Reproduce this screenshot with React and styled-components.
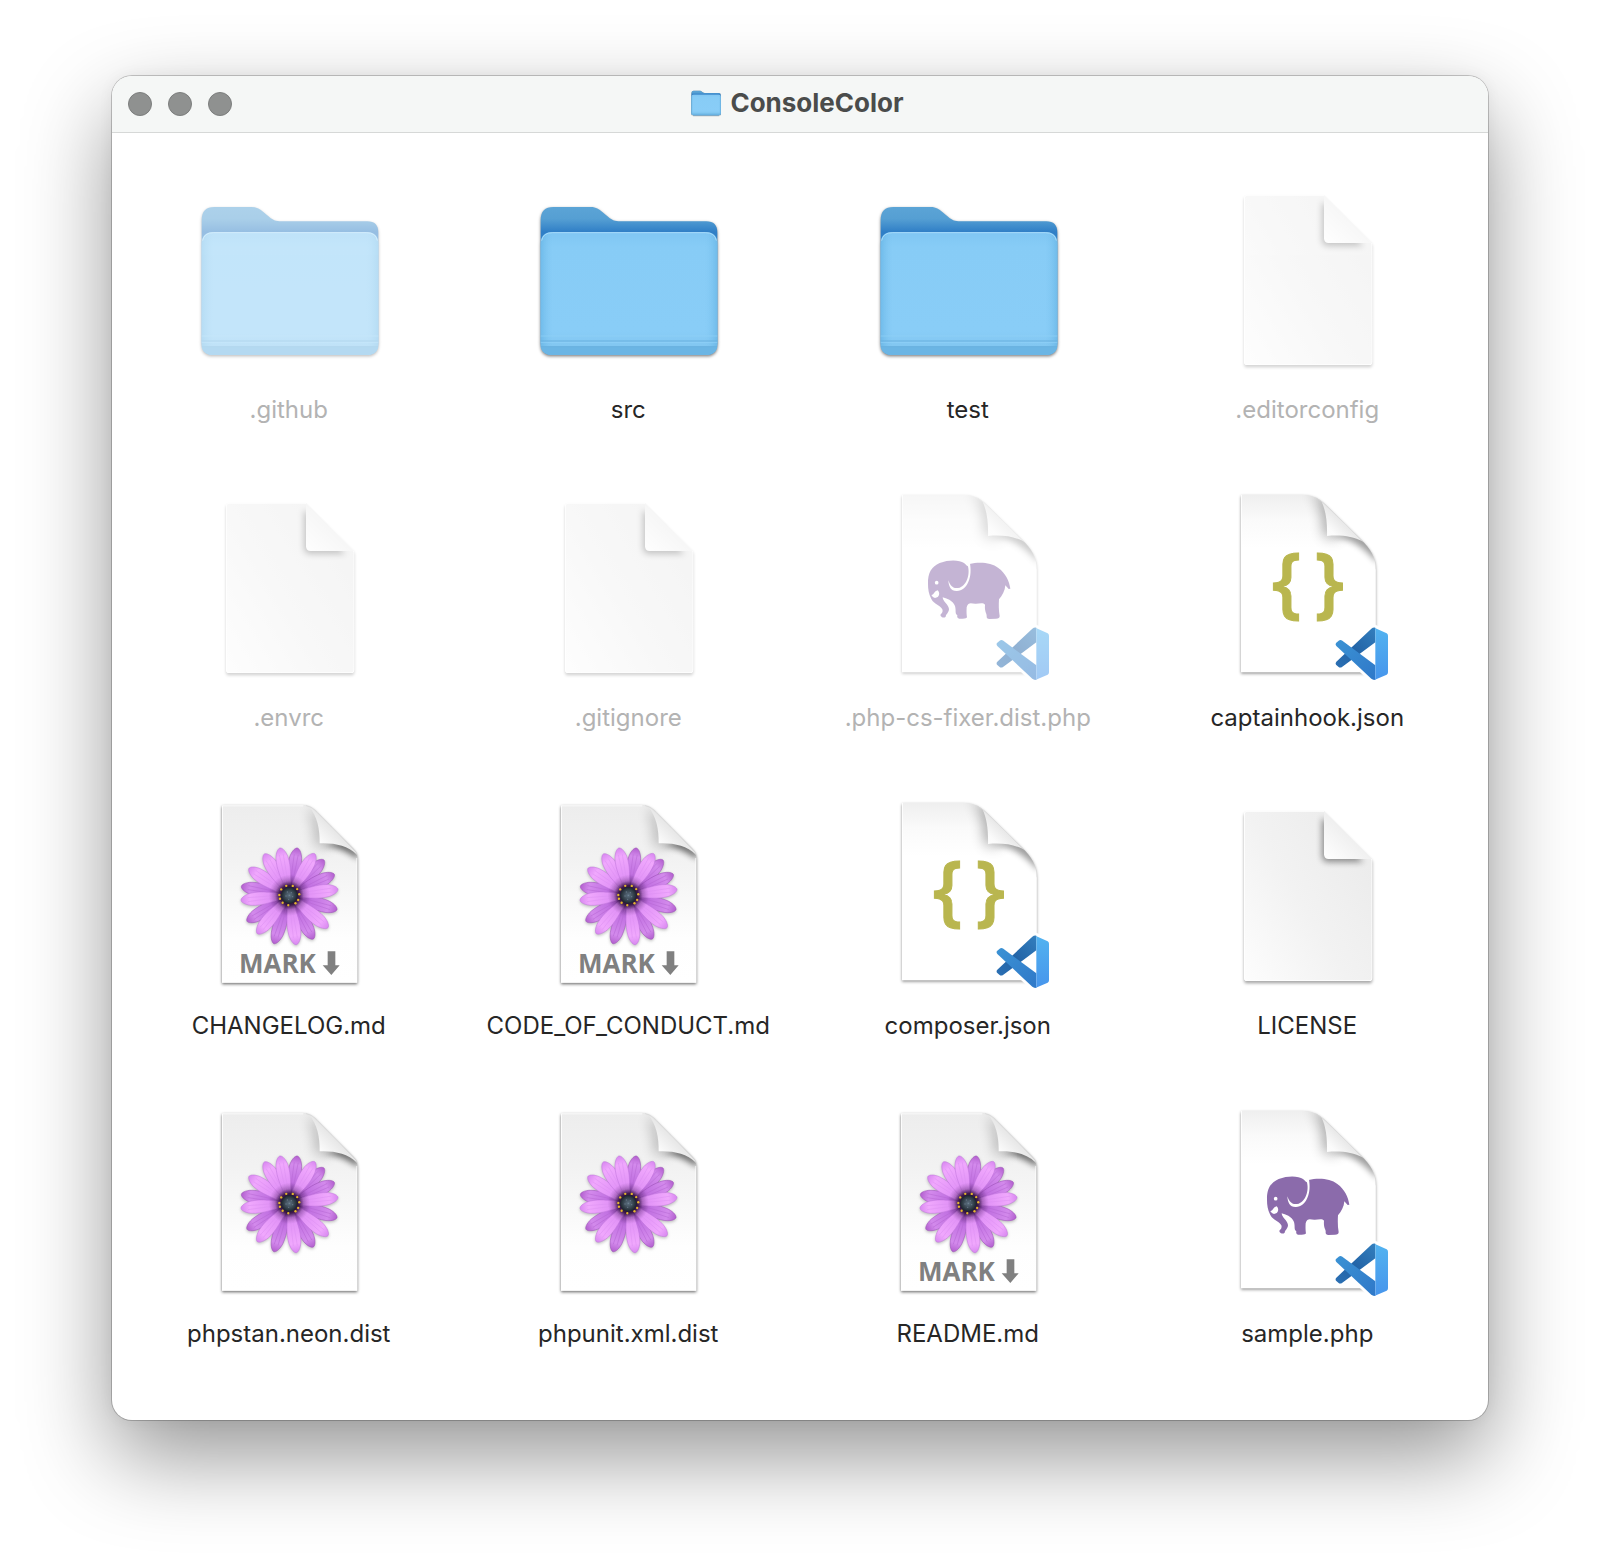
import React from "react";
import styled, { createGlobalStyle } from "styled-components";

const GlobalStyle = createGlobalStyle`
  * { box-sizing: border-box; }
  body { margin: 0; background: #fff; font-family: Inter, "Liberation Sans", sans-serif; }
`;

const Desktop = styled.main`
  padding: 76px 112px 148px;
`;

const Window = styled.section`
  border-radius: 20px;
  background: #fff;
  overflow: hidden;
  box-shadow: 0 0 0 1px rgba(0, 0, 0, 0.2), 0 36px 88px rgba(0, 0, 0, 0.42), 0 0 16px rgba(0, 0, 0, 0.05);
`;

const TitleBar = styled.header`
  display: grid;
  grid-template-columns: 1fr auto 1fr;
  align-items: center;
  height: 57px;
  padding: 0 22px 0 16px;
  background: #f5f7f6;
  border-bottom: 1px solid #d6d8d7;
`;

const Lights = styled.div`
  display: flex;
  gap: 16px;
`;

const Light = styled.button`
  width: 24px;
  height: 24px;
  padding: 0;
  border: 1px solid #7c7e7d;
  border-radius: 50%;
  background: #8f9190;
`;

const Title = styled.h1`
  display: flex;
  align-items: center;
  gap: 8px;
  margin: 0;
  padding-bottom: 2px;
  color: #4a4c4b;
  font-size: 26px;
  line-height: 32px;
  font-weight: 700;
`;

const TitleIcon = styled.svg`
  width: 32px;
  height: 32px;
`;

const Grid = styled.ul`
  display: grid;
  grid-template-columns: repeat(4, 1fr);
  row-gap: 67px;
  margin: 0;
  padding: 51px 10px 71px 8px;
  list-style: none;
`;

const Cell = styled.li`
  display: flex;
  justify-content: center;
`;

const FileButton = styled.button`
  display: flex;
  flex-direction: column;
  align-items: center;
  gap: 19px;
  padding: 0;
  border: 0;
  background: none;
  font-family: inherit;
`;

const Icon = styled.svg`
  display: block;
  width: 192px;
  height: 192px;
  opacity: ${(p) => (p.$dim ? 0.5 : 1)};
`;

const Name = styled.span`
  padding-right: 2px;
  color: ${(p) => (p.$dim ? "#b3b3b3" : "#262626")};
  font-size: 24px;
  line-height: 30px;
  white-space: nowrap;
`;

const Lifted = styled.g`
  filter: drop-shadow(0 ${(p) => p.$drop || 4}px 4px rgba(0, 0, 0, ${(p) => p.$strength || 0.4}));
`;

const Defs = styled.svg`
  display: block;
  width: 0;
  height: 0;
`;

const MarkText = styled.text`
  font-family: "Open Sans", "Noto Sans", sans-serif;
  font-size: 78px;
  font-weight: 700;
  fill: #808080;
`;

const BraceText = styled.text`
  font-family: "Open Sans", "Noto Sans", sans-serif;
  font-size: 231px;
  font-weight: 600;
  fill: #b9b64f;
  stroke: #b9b64f;
  stroke-width: 3px;
  text-anchor: middle;
`;

function SharedDefs() {
  return (
    <Defs aria-hidden="true">
      <defs>
        <linearGradient id="folderBack" x1="0" y1="0" x2="0" y2="1">
          <stop offset="0" stopColor="#5ba4d6" />
          <stop offset=".08" stopColor="#559fd3" />
          <stop offset=".17" stopColor="#2f7ec6" />
          <stop offset=".3" stopColor="#3c8ccc" />
        </linearGradient>
        <linearGradient id="folderSide" x1="0" y1="0" x2="1" y2="0">
          <stop offset="0" stopColor="#5cade0" stopOpacity=".55" />
          <stop offset=".07" stopColor="#7cc4f0" stopOpacity="0" />
          <stop offset=".93" stopColor="#7cc4f0" stopOpacity="0" />
          <stop offset="1" stopColor="#5cade0" stopOpacity=".55" />
        </linearGradient>
        <linearGradient id="folderFront" x1="0" y1="0" x2="0" y2="1">
          <stop offset="0" stopColor="#7fc6f3" />
          <stop offset=".12" stopColor="#87ccf6" />
          <stop offset=".8" stopColor="#89cdf7" />
          <stop offset="1" stopColor="#7ec3ee" />
        </linearGradient>
        <linearGradient id="paper" x1="1" y1=".2" x2="0" y2="1">
          <stop offset="0" stopColor="#ebebeb" />
          <stop offset=".5" stopColor="#f2f2f2" />
          <stop offset="1" stopColor="#fdfdfd" />
        </linearGradient>
        <linearGradient id="paperFold" x1="0" y1="1" x2=".55" y2=".4">
          <stop offset="0" stopColor="#fff" />
          <stop offset="1" stopColor="#ededed" />
        </linearGradient>
        <linearGradient id="sheet" x1="0" y1="0" x2="0" y2="1">
          <stop offset="0" stopColor="#ededed" />
          <stop offset=".3" stopColor="#f2f2f2" />
          <stop offset=".75" stopColor="#fefefe" />
          <stop offset="1" stopColor="#fff" />
        </linearGradient>
        <linearGradient id="codeSheet" x1="0" y1="0" x2="0" y2="1">
          <stop offset="0" stopColor="#efefef" />
          <stop offset=".14" stopColor="#fafafa" />
          <stop offset=".3" stopColor="#fff" />
        </linearGradient>
        <linearGradient id="curl" x1="0" y1="1" x2=".5" y2=".5">
          <stop offset="0" stopColor="#fff" />
          <stop offset=".5" stopColor="#fbfbfb" />
          <stop offset="1" stopColor="#e8e8e8" />
        </linearGradient>
        <linearGradient id="petalPale" x1="0" y1="1" x2="0" y2="0">
          <stop offset="0" stopColor="#b05fcc" />
          <stop offset=".3" stopColor="#e192f7" />
          <stop offset=".8" stopColor="#f0a8fd" />
          <stop offset="1" stopColor="#d888f0" />
        </linearGradient>
        <linearGradient id="petalDeep" x1="0" y1="1" x2="0" y2="0">
          <stop offset="0" stopColor="#7a359a" />
          <stop offset=".4" stopColor="#c272e2" />
          <stop offset=".8" stopColor="#d38aec" />
          <stop offset="1" stopColor="#b25fce" />
        </linearGradient>
        <radialGradient id="flowerShade">
          <stop offset="0" stopColor="#12001c" />
          <stop offset=".48" stopColor="#1d0528" stopOpacity=".8" />
          <stop offset=".7" stopColor="#2d0a40" stopOpacity=".25" />
          <stop offset="1" stopColor="#3a0d50" stopOpacity="0" />
        </radialGradient>
        <radialGradient id="flowerCore">
          <stop offset="0" stopColor="#5f7283" />
          <stop offset=".6" stopColor="#37444f" />
          <stop offset="1" stopColor="#1b232c" />
        </radialGradient>
        <linearGradient id="codePanel" x1="0" y1="0" x2="0" y2="1">
          <stop offset="0" stopColor="#52b3f0" />
          <stop offset="1" stopColor="#4795ec" />
        </linearGradient>
        <linearGradient id="codeUpper" x1="1" y1="0" x2="0" y2="1">
          <stop offset="0" stopColor="#337fbe" />
          <stop offset=".55" stopColor="#2263a6" />
          <stop offset="1" stopColor="#2b70b4" />
        </linearGradient>
        <linearGradient id="codeLower" x1="0" y1="0" x2="1" y2="1">
          <stop offset="0" stopColor="#3b92d4" />
          <stop offset="1" stopColor="#2f78c8" />
        </linearGradient>
        <filter id="soft" x="-60%" y="-60%" width="220%" height="220%">
          <feGaussianBlur stdDeviation="10" />
        </filter>
        <filter id="wide" x="-120%" y="-60%" width="340%" height="220%">
          <feGaussianBlur stdDeviation="20" />
        </filter>
        <clipPath id="paperClip">
          <path d="M82 45H312L457 190V545Q457 555 447 555H82Q72 555 72 545V55Q72 45 82 45Z" />
        </clipPath>
        <clipPath id="sheetClip">
          <path d="M66 46H310C330 46 342 58 352 68L460 177Q472 188 472 204V578H66Z" />
        </clipPath>
        <clipPath id="codeClip">
          <path d="M93 45H278C312 45 330 58 346 74L452 178C482 206 497 232 497 268V577H93Z" />
        </clipPath>
      </defs>
    </Defs>
  );
}

function FolderShape() {
  return (
    <Lifted $strength={0.5}>
      <path
        fill="url(#folderBack)"
        d="M65 90Q65 51 103 51H215C232 51 240 58 250 66L268 81C280 91 288 94 304 94H562Q595 94 595 128V460Q595 495 560 495H100Q65 495 65 460Z"
      />
      <path fill="url(#folderFront)" d="M65 162Q65 126 101 126H559Q595 126 595 162V459Q595 495 559 495H101Q65 495 65 459Z" />
      <path fill="url(#folderSide)" d="M65 162Q65 126 101 126H559Q595 126 595 162V459Q595 495 559 495H101Q65 495 65 459Z" />
      <path fill="#6bb5e4" d="M65 471H595Q590 495 559 495H101Q70 495 65 471Z" />
      <path stroke="#68b0de" strokeWidth="3" d="M65 453H595M65 470H595" />
      <path stroke="#92d2f8" strokeWidth="2" d="M65 438H595M65 457H595" />
      <path fill="none" stroke="#a5dafa" strokeWidth="3" d="M68 152Q72 128 101 128H559Q588 128 592 152" />
    </Lifted>
  );
}

function FolderIcon({ dim }) {
  return (
    <Icon $dim={dim} viewBox="42 -18 576 576" aria-hidden="true">
      <FolderShape />
    </Icon>
  );
}

function PaperIcon({ dim }) {
  return (
    <Icon $dim={dim} viewBox="-24 12 576 576" aria-hidden="true">
      <Lifted $drop={7} $strength={0.34}>
        <path fill="url(#paper)" d="M82 45H312L457 190V545Q457 555 447 555H82Q72 555 72 545V55Q72 45 82 45Z" />
      </Lifted>
      <g clipPath="url(#paperClip)">
        <path fill="#000" opacity=".42" filter="url(#soft)" d="M306 66V180Q306 198 326 198H430L330 80Z" />
        <path fill="none" stroke="#fff" strokeWidth="5" d="M82 45H312L457 190V545Q457 555 447 555H82Q72 555 72 545V55Q72 45 82 45Z" />
      </g>
      <path fill="url(#paperFold)" d="M312 45L457 189H326Q312 189 312 175Z" />
    </Icon>
  );
}

const PETALS = [
  [292, 174, 1], [372, 210, 1], [403, 253, 1], [411, 359, 1], [340, 447, 1], [222, 461, 1],
  [141, 394, 1], [124, 289, 1], [147, 235, 0], [193, 192, 0], [240, 174, 0], [344, 191, 0],
  [414, 298, 0], [384, 413, 0], [289, 464, 0], [172, 431, 0], [123, 331, 0],
];

const CENTER = [268, 316];

function Petal({ x, y, deep }) {
  const dx = x - CENTER[0];
  const dy = y - CENTER[1];
  const length = Math.hypot(dx, dy);
  const angle = (Math.atan2(dx, -dy) * 180) / Math.PI;
  const at = (k) => -length * k;
  return (
    <g transform={`translate(${CENTER[0]} ${CENTER[1]}) rotate(${angle})`}>
      <path
        fill={`url(#${deep ? "petalDeep" : "petalPale"})`}
        stroke={deep ? "#9a4db6" : "#c074dc"}
        strokeWidth="1.5"
        d={`M-7 -14C-14 ${at(0.4)} -23 ${at(0.56)} -18 ${at(0.8)}C-14 ${at(0.94)} -5 ${at(1)} 0 ${at(1)}C5 ${at(1)} 14 ${at(0.94)} 18 ${at(0.8)}C23 ${at(0.56)} 14 ${at(0.4)} 7 -14Z`}
      />
      <path
        fill="none"
        stroke={deep ? "#b767d4" : "#dc90f2"}
        strokeWidth="1.5"
        d={`M-3 -30L-6 ${at(0.86)}M3 -30L6 ${at(0.86)}`}
      />
    </g>
  );
}

function Flower() {
  const stamens = [20, 52, 84, 118, 142, 186, 222, 250, 272, 306, 342];
  return (
    <Lifted $strength={0.25}>
      {PETALS.map(([x, y, deep]) => (
        <Petal key={`${x}-${y}`} x={x} y={y} deep={deep} />
      ))}
      <circle cx="268" cy="316" r="62" fill="url(#flowerShade)" />
      <circle cx="268" cy="316" r="25" fill="url(#flowerCore)" />
      {stamens.map((a) => (
        <circle
          key={a}
          cx={268 + 30 * Math.sin((a * Math.PI) / 180)}
          cy={316 - 30 * Math.cos((a * Math.PI) / 180)}
          r="3.5"
          fill="#e3b52e"
        />
      ))}
      <g fill="#8094a6" opacity=".6">
        <circle cx="262" cy="306" r="2" />
        <circle cx="274" cy="308" r="2" />
        <circle cx="268" cy="316" r="2" />
        <circle cx="258" cy="318" r="2" />
        <circle cx="278" cy="320" r="2" />
        <circle cx="266" cy="328" r="2" />
      </g>
    </Lifted>
  );
}

function FlowerIcon({ dim, mark }) {
  return (
    <Icon $dim={dim} viewBox="-18 30 576 576" aria-hidden="true">
      <Lifted $strength={0.6}>
        <path fill="url(#sheet)" d="M66 46H310C330 46 342 58 352 68L460 177Q472 188 472 204V578H66Z" />
      </Lifted>
      <g clipPath="url(#sheetClip)">
        <path fill="#000" opacity=".3" filter="url(#wide)" d="M326 66C350 90 348 120 350 168H390L360 66Z" />
        <path fill="#000" opacity=".6" filter="url(#soft)" d="M366 166C400 166 440 182 476 208V186L430 150Z" />
        <path fill="none" stroke="#fff" strokeWidth="5" d="M66 46H310M66 46V578H472V204" />
      </g>
      <path fill="url(#curl)" d="M328 50C352 80 360 118 359 160C402 158 442 166 471 194Q468 184 460 177L352 68Q340 55 328 50Z" />
      <path fill="none" stroke="#d4d4d4" strokeWidth="2" d="M318 47C334 50 342 58 352 68L460 177Q468 184 471 194" />
      <Flower />
      {mark && (
        <>
          <MarkText x="117" y="548">MARK</MarkText>
          <path fill="#808080" d="M383 484H406V526H419L394 555L368 526H383Z" />
        </>
      )}
    </Icon>
  );
}

function CodeBadge() {
  const outline = "M490 443L530 460Q534 462 534 467V577Q534 582 530 584L490 600L424 538L392 562L376 549L404 522L376 494L392 480L424 505Z";
  return (
    <>
      <path fill="#fff" stroke="#fff" strokeWidth="20" strokeLinejoin="round" d={outline} />
      <path fill="url(#codeUpper)" d="M484 446Q489 442 496 443V487L396 561Q390 565 385 560L378 554Q375 549 379 545Z" />
      <path fill="url(#codeLower)" d="M379 498Q375 493 378 489L386 482Q391 478 397 482L496 556V600Q489 600 484 596Z" />
      <path fill="url(#codePanel)" d="M493 443L530 460Q534 462 534 467V577Q534 582 530 584L493 600Q496 598 496 594V449Q496 445 493 443Z" />
    </>
  );
}

function Elephant() {
  return (
    <g transform="translate(30 12)">
      <path
        fill="#8b6bab"
        d="M141 300C140 266 152 248 176 237C205 226 236 228 249 237Q256 242 259 247L266 240C292 234 330 234 352 252C374 268 385 292 388 314L383 315L373 304C372 320 364 335 354 346C353 362 353 380 356 396Q356 404 345 404L325 405Q316 405 317 396C318 388 310 384 312 362C308 355 295 358 285 359C272 360 262 352 257 370C256 385 257 394 258 400Q257 404 245 404L234 404Q227 402 229 394C221 388 226 380 222 366C215 348 196 344 185 340C186 354 202 360 204 375C204 386 195 390 194 398Q190 402 183 400Q176 396 179 391Q187 385 184 376C176 362 160 362 151 345C143 330 141 315 141 300Z"
      />
      <path fill="#fff" d="M256 234C272 264 258 304 236 311C220 315 210 311 202 289C203 308 210 322 228 321C258 320 276 280 266 234Z" />
      <circle cx="167" cy="296" r="5.5" fill="#fff" />
      <path fill="#fff" d="M151 333C160 333 159 321 170 319C178 326 176 341 162 342Q155 341 151 333Z" />
    </g>
  );
}

function CodeIcon({ dim, php }) {
  return (
    <Icon $dim={dim} viewBox="6 36 576 576" aria-hidden="true">
      <Lifted $strength={0.45}>
        <path fill="url(#codeSheet)" d="M93 45H278C312 45 330 58 346 74L452 178C482 206 497 232 497 268V577H93Z" />
      </Lifted>
      <g clipPath="url(#codeClip)">
        <path fill="#000" opacity=".4" filter="url(#wide)" d="M300 30C346 70 340 120 346 172H386L366 60Z" />
        <path fill="#000" opacity=".38" filter="url(#soft)" d="M364 170C404 170 446 184 504 250V196L430 150Z" />
        <path fill="none" stroke="#fff" strokeWidth="5" d="M93 45V577H497V268" />
      </g>
      <path fill="url(#curl)" d="M334 63C348 92 352 126 351 168C396 164 428 170 458 184L346 74Z" />
      <path fill="none" stroke="#d8d8d8" strokeWidth="2" d="M318 54Q332 61 346 74L458 184" />
      {php ? (
        <Elephant />
      ) : (
        <>
          <BraceText x="230" y="388">{"{"}</BraceText>
          <BraceText x="358" y="388">{"}"}</BraceText>
        </>
      )}
      <CodeBadge />
    </Icon>
  );
}

const ICONS = {
  folder: (dim) => <FolderIcon dim={dim} />,
  paper: (dim) => <PaperIcon dim={dim} />,
  flower: (dim) => <FlowerIcon dim={dim} />,
  markdown: (dim) => <FlowerIcon dim={dim} mark />,
  json: (dim) => <CodeIcon dim={dim} />,
  php: (dim) => <CodeIcon dim={dim} php />,
};

const FILES = [
  { name: ".github", kind: "folder", hidden: true },
  { name: "src", kind: "folder" },
  { name: "test", kind: "folder" },
  { name: ".editorconfig", kind: "paper", hidden: true },
  { name: ".envrc", kind: "paper", hidden: true },
  { name: ".gitignore", kind: "paper", hidden: true },
  { name: ".php-cs-fixer.dist.php", kind: "php", hidden: true },
  { name: "captainhook.json", kind: "json" },
  { name: "CHANGELOG.md", kind: "markdown" },
  { name: "CODE_OF_CONDUCT.md", kind: "markdown" },
  { name: "composer.json", kind: "json" },
  { name: "LICENSE", kind: "paper" },
  { name: "phpstan.neon.dist", kind: "flower" },
  { name: "phpunit.xml.dist", kind: "flower" },
  { name: "README.md", kind: "markdown" },
  { name: "sample.php", kind: "php" },
];

export default function App() {
  return (
    <>
      <GlobalStyle />
      <SharedDefs />
      <Desktop>
        <Window>
          <TitleBar>
            <Lights>
              <Light type="button" aria-label="Close" />
              <Light type="button" aria-label="Minimize" />
              <Light type="button" aria-label="Zoom" />
            </Lights>
            <Title>
              <TitleIcon viewBox="38 -16 580 580" aria-hidden="true">
                <FolderShape />
              </TitleIcon>
              ConsoleColor
            </Title>
          </TitleBar>
          <Grid>
            {FILES.map((file) => (
              <Cell key={file.name}>
                <FileButton type="button">
                  {ICONS[file.kind](file.hidden)}
                  <Name $dim={file.hidden}>{file.name}</Name>
                </FileButton>
              </Cell>
            ))}
          </Grid>
        </Window>
      </Desktop>
    </>
  );
}
